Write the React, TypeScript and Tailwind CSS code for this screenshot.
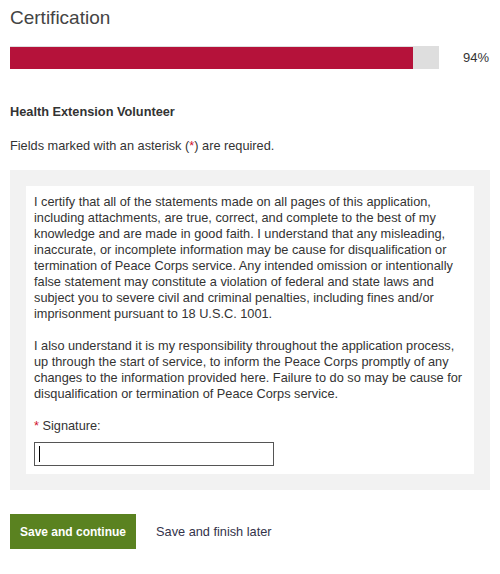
const paraOne = [
  "I certify that all of the statements made on all pages of this application,",
  "including attachments, are true, correct, and complete to the best of my",
  "knowledge and are made in good faith. I understand that any misleading,",
  "inaccurate, or incomplete information may be cause for disqualification or",
  "termination of Peace Corps service. Any intended omission or intentionally",
  "false statement may constitute a violation of federal and state laws and",
  "subject you to severe civil and criminal penalties, including fines and/or",
  "imprisonment pursuant to 18 U.S.C. 1001.",
];

const paraTwo = [
  "I also understand it is my responsibility throughout the application process,",
  "up through the start of service, to inform the Peace Corps promptly of any",
  "changes to the information provided here. Failure to do so may be cause for",
  "disqualification or termination of Peace Corps service.",
];

function Lines({ lines }: { lines: string[] }) {
  return (
    <p className="whitespace-nowrap">
      {lines.map((line, i) => (
        <span key={i}>
          {line}
          {i < lines.length - 1 && <br />}
        </span>
      ))}
    </p>
  );
}

export default function App() {
  const progress = 94;

  return (
    <div className="w-[500px] h-[574px] bg-white px-[10px] pt-[7px] text-[12.75px] leading-[16px] text-[#333] font-['Liberation_Sans',Arial,sans-serif]">
      <h1 className="text-[19px] leading-[22px] text-[#444]">Certification</h1>

      <div className="mt-[17px] flex items-center justify-between">
        <div className="w-[429px] h-[23px] bg-[#dedede] pt-[1px]">
          <div className="h-full bg-[#b5123a]" style={{ width: `${progress}%` }} />
        </div>
        <span className="pr-[1px] text-[13px] text-[#333]">{progress}%</span>
      </div>

      <h2 className="mt-[35px] font-bold text-[#333]">Health Extension Volunteer</h2>

      <p className="mt-[18px]">
        Fields marked with an asterisk (<span className="text-[#d0112b]">*</span>) are required.
      </p>

      <div className="mt-[16px] bg-[#f2f2f2] p-[16px]">
        <div className="bg-white px-[8px] py-[8px] flex flex-col gap-[16px]">
          <Lines lines={paraOne} />
          <Lines lines={paraTwo} />
          <div className="flex flex-col gap-[8px]">
            <label>
              <span className="text-[#d0112b]">*</span> Signature:
            </label>
            <div className="w-[240px] h-[24px] border border-dotted border-black outline outline-1 outline-offset-[-1px] outline-[#555] flex items-center pl-[4px]">
              <div className="w-[1px] h-[16px] bg-black" />
            </div>
          </div>
        </div>
      </div>

      <div className="mt-[24px] flex items-center gap-[20px]">
        <button className="h-[35px] px-[10px] bg-[#5a8220] text-[12px] text-white font-bold">
          Save and continue
        </button>
        <button className="text-[#33334a]">Save and finish later</button>
      </div>
    </div>
  );
}
